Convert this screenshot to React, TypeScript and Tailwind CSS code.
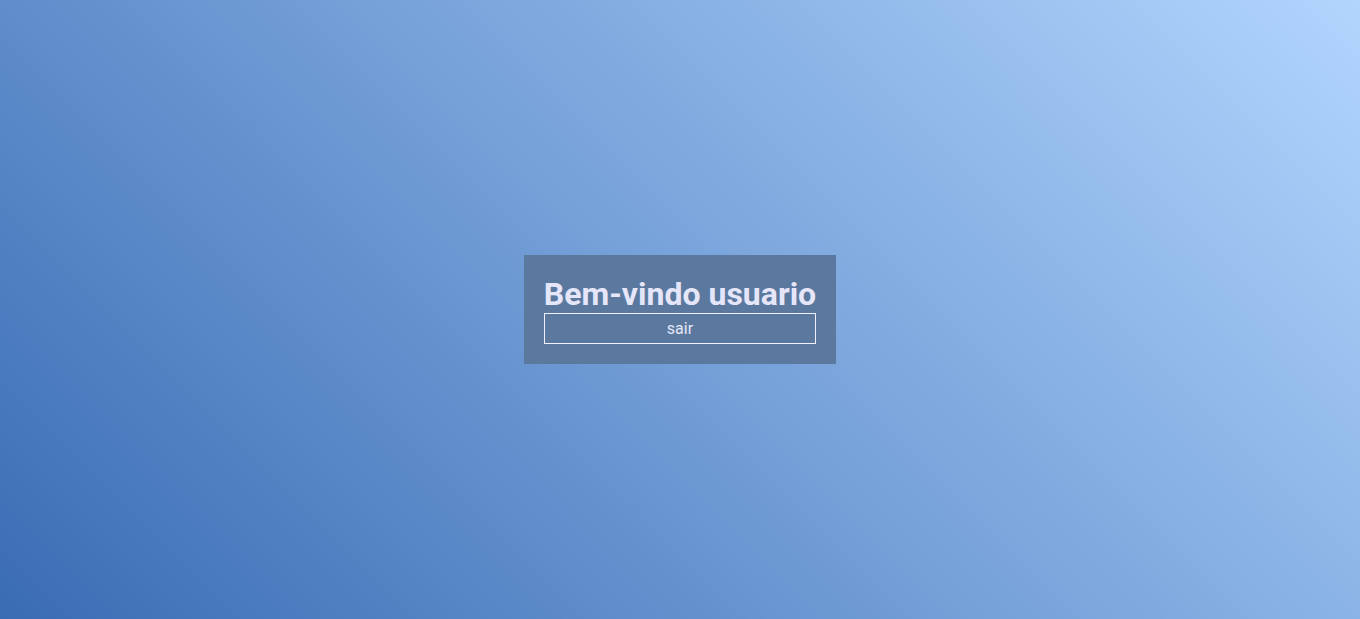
export default function App() {
  return (
    <div className="flex h-[619px] w-full items-center justify-center bg-[linear-gradient(45deg,#3a6cb4,#b1d5fd)] font-['Roboto',sans-serif]">
      <div className="flex flex-col bg-[#5b799e] p-5">
        <h1 className="text-[32px] font-bold leading-[38px] text-[#e6e6fa]">
          Bem-vindo usuario
        </h1>
        <button className="h-[31px] w-full border border-[#f0f0ff] bg-transparent text-base text-[#e6e6fa]">
          sair
        </button>
      </div>
    </div>
  );
}
